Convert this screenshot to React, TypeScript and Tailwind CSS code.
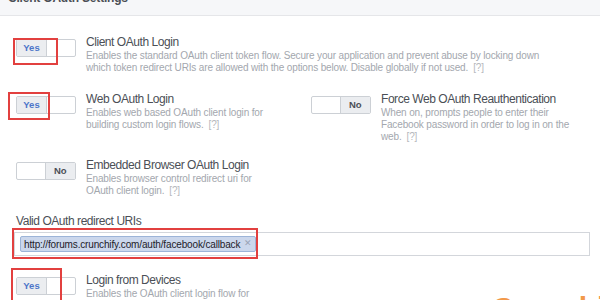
import React from 'react';

type ToggleProps = { on: boolean };

const Toggle = ({ on }: ToggleProps) => (
    <div className="flex h-[18px] w-[60px] shrink-0 overflow-hidden rounded-[2px] border border-[#ccd0d5] bg-white">
        {on ? (
            <>
                <div className="flex w-[30px] items-center justify-center bg-[#ebedf0] text-[9.5px] font-bold text-[#4d76c9]">Yes</div>
                <div className="w-[30px] border-l border-[#ccd0d5]" />
            </>
        ) : (
            <>
                <div className="w-[29px] border-r border-[#ccd0d5]" />
                <div className="flex w-[30px] items-center justify-center bg-[#ebedf0] text-[9.5px] font-bold text-[#4b4f56]">No</div>
            </>
        )}
    </div>
);

type SettingProps = { on: boolean; title: string; lines: string[] };

const Setting = ({ on, title, lines }: SettingProps) => (
    <div className="flex items-start gap-[10px]">
        <div className="pt-[4px]">
            <Toggle on={on} />
        </div>
        <div className="whitespace-nowrap">
            <div className="text-[12px] leading-[15px] tracking-[-0.45px] text-[#4b4f56]">{title}</div>
            {lines.map((line, i) => (
                <div key={i} className="text-[10px] leading-[12px] tracking-[-0.15px] text-[#a3a7ae]">
                    {line}
                    {i === lines.length - 1 && line.length > 0 && (
                        <span className="ml-[5px] text-[#b5b8bd]">[?]</span>
                    )}
                </div>
            ))}
        </div>
    </div>
);

const RedBox = ({ className }: { className: string }) => (
    <div className={`pointer-events-none absolute border-2 border-[#e2403f] ${className}`} />
);

export default function App() {
    return (
        <div
            className="relative h-[300px] w-[600px] overflow-hidden bg-white"
            style={{ fontFamily: '"Liberation Sans", Arial, sans-serif' }}
        >
            {/* header */}
            <div className="h-[16px] overflow-hidden border-b border-[#e5e6e9] bg-[#f6f7f9] pl-[8px]">
                <div className="-mt-[10px] text-[12px] font-bold leading-[16px] tracking-[-0.2px] text-[#4b4f56]">Client OAuth Settings</div>
            </div>

            <div className="px-[16px] pt-[19px]">
                <Setting
                    on
                    title="Client OAuth Login"
                    lines={[
                        'Enables the standard OAuth client token flow. Secure your application and prevent abuse by locking down',
                        'which token redirect URIs are allowed with the options below. Disable globally if not used.',
                    ]}
                />

                <div className="mt-[18px] grid grid-cols-[295px_1fr]">
                    <Setting
                        on
                        title="Web OAuth Login"
                        lines={['Enables web based OAuth client login for', 'building custom login flows.']}
                    />
                    <Setting
                        on={false}
                        title="Force Web OAuth Reauthentication"
                        lines={[
                            'When on, prompts people to enter their',
                            'Facebook password in order to log in on the',
                            'web.',
                        ]}
                    />
                </div>

                <div className="mt-[15px]">
                    <Setting
                        on={false}
                        title="Embedded Browser OAuth Login"
                        lines={['Enables browser control redirect uri for', 'OAuth client login.']}
                    />
                </div>

                <div className="mt-[16px] text-[12px] leading-[16px] tracking-[-0.45px] text-[#4b4f56]">Valid OAuth redirect URIs</div>
                <div className="ml-[-2px] mt-[3px] flex h-[24px] w-[576px] items-center border border-[#d3d6db] bg-white pl-[5px]">
                    <div className="flex h-[16px] items-center rounded-[2px] border border-[#9cb4d8] bg-[#cbd7ec] pl-[3px] pr-[3px] text-[10px] tracking-[-0.15px] text-[#1d2129]">
                        http://forums.crunchify.com/auth/facebook/callback
                        <span className="ml-[4px] text-[9px] text-[#9aa3b5]">✕</span>
                    </div>
                </div>

                <div className="mt-[17px]">
                    <Setting on title="Login from Devices" lines={['Enables the OAuth client login flow for', '']} />
                </div>
            </div>

            {/* annotations */}
            <RedBox className="left-[13px] top-[38px] h-[27px] w-[45px]" />
            <RedBox className="left-[8px] top-[92px] h-[28px] w-[42px]" />
            <RedBox className="left-[12px] top-[228px] h-[31px] w-[246px]" />
            <RedBox className="left-[11px] top-[268px] h-[40px] w-[51px]" />

            {/* watermark */}
            <div className="pointer-events-none absolute left-[492px] top-[293px] text-[30px] font-bold leading-[30px] text-[#f2994a]">
                Crunchify
            </div>
        </div>
    );
}
